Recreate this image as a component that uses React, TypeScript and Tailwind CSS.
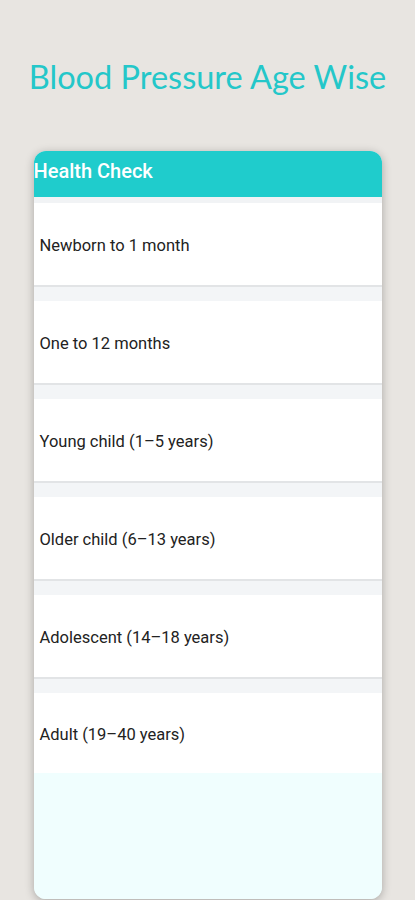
const groups = [
  'Newborn to 1 month',
  'One to 12 months',
  'Young child (1–5 years)',
  'Older child (6–13 years)',
  'Adolescent (14–18 years)',
  'Adult (19–40 years)',
];

export default function App() {
  return (
    <div className="h-[900px] overflow-hidden bg-[#e8e5e1] font-['Roboto',sans-serif]">
      <h1 className="pt-[57px] h-[151px] text-center text-[32.5px] leading-[40px] text-[#24c7c9] font-['Lato',sans-serif]">
        Blood Pressure Age Wise
      </h1>

      <div className="mx-auto w-[348px] h-[748px] rounded-xl overflow-hidden bg-[#f0fefe] shadow-[0_2px_10px_rgba(0,0,0,0.28)] flex flex-col">
        <div className="h-[46px] pb-[6px] bg-[#1fcccc] flex items-center">
          <span className="text-white text-[20px] font-medium">Health Check</span>
        </div>
        <div className="h-[6px] bg-[#f1f3f5]" />
        {groups.map((g, i) => {
          const last = i === groups.length - 1;
          return (
            <div key={g}>
              <div className={`${last ? 'h-[80px]' : 'h-[84px] border-b-2 border-[#e2e4e6]'} bg-white flex items-center px-[6px] pt-[5px]`}>
                <span className="text-[16.5px] text-[#222]">{g}</span>
              </div>
              {!last && <div className="h-[14px] bg-[#f3f5f7]" />}
            </div>
          );
        })}
        <div className="flex-1 bg-[#f0fefe]" />
      </div>
    </div>
  );
}
